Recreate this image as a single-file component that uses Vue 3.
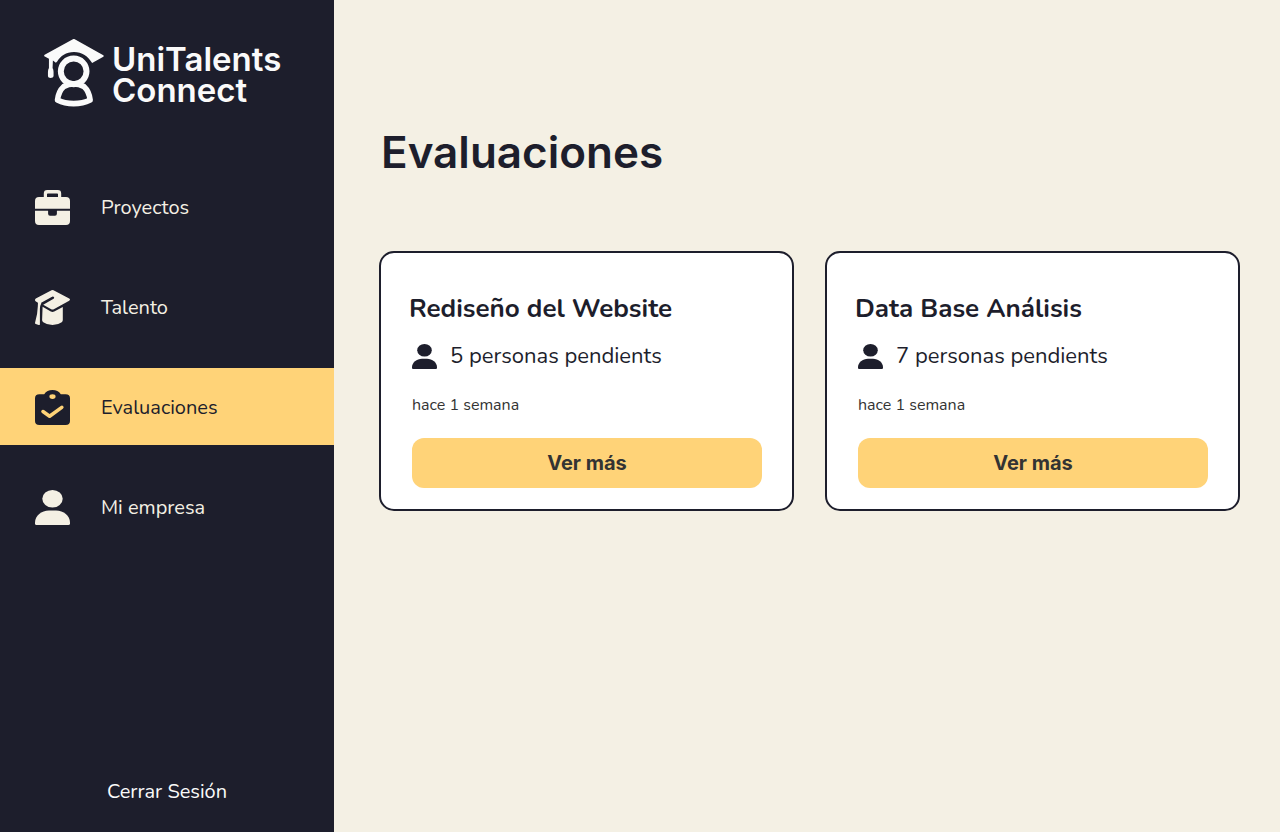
<script setup>
const navItems = [
  { id: 'proyectos', label: 'Proyectos' },
  { id: 'talento', label: 'Talento' },
  { id: 'evaluaciones', label: 'Evaluaciones' },
  { id: 'empresa', label: 'Mi empresa' },
]
const current = 'evaluaciones'

const evaluations = [
  { id: 1, title: 'Rediseño del Website', pending: '5 personas pendients', date: 'hace 1 semana' },
  { id: 2, title: 'Data Base Análisis', pending: '7 personas pendients', date: 'hace 1 semana' },
]
</script>

<template>
  <div class="app">
    <aside class="sidebar">
      <a class="brand" href="#">
        <svg class="brand-mark" viewBox="0 0 182 206" aria-hidden="true">
          <path fill="currentColor" d="M89 0 Q90 -1 92 0 L180 49 Q183 51 180 54 L146 73 C134 51 115 39 91 39 C67 39 50 51 40 68 L36 72 L27 65 L26 88 Q29 93 29 100 L29 113 Q28 118 20 118 Q12 118 12 113 L12 100 Q12 93 15 88 L15 60 L1 52 Q-1 50 2 48 Z" />
          <circle cx="90" cy="98" r="39" fill="none" stroke="currentColor" stroke-width="18" />
          <path fill="none" stroke="currentColor" stroke-width="17" stroke-linejoin="round" d="M60 144 C49 154 43 167 41 185 Q62 196 90 196 Q118 196 140 185 C138 167 132 154 121 144 Q107 136 90 136 Q74 136 60 144 Z" />
        </svg>
        <span class="brand-name">UniTalents<br />Connect</span>
      </a>

      <nav class="nav">
        <a
          v-for="item in navItems"
          :key="item.id"
          href="#"
          class="nav-item"
          :class="{ active: item.id === current }"
          :aria-current="item.id === current ? 'page' : undefined"
        >
          <svg class="nav-icon" viewBox="0 0 35 35" fill="currentColor" aria-hidden="true">
            <template v-if="item.id === 'proyectos'">
              <path fill-rule="evenodd" d="M8.8 7 V3.4 Q8.8 0 12.2 0 H22.8 Q26.2 0 26.2 3.4 V7 H31 Q35 7 35 11 V18.7 H0 V11 Q0 7 4 7 Z M12 7 H23 V4.2 Q23 3.4 22.2 3.4 H12.8 Q12 3.4 12 4.2 Z" />
              <path d="M0 20.8 H13.1 V23.8 Q13.1 25.7 15 25.7 H20 Q21.9 25.7 21.9 23.8 V20.8 H35 V31 Q35 35 31 35 H4 Q0 35 0 31 Z" />
            </template>
            <template v-else-if="item.id === 'talento'">
              <path d="M16.5 0.3 Q17.5 -0.2 18.5 0.3 L34.2 8.4 Q35.8 9.6 34.2 10.8 L18.8 19.2 Q17.5 19.9 16.2 19.2 L8.2 14.8 L18.6 8.8 Q19.6 8 18.9 7 Q18.2 6.3 17.1 6.8 L6.2 12.8 Q4.8 14 4.6 15.6 Q3.4 15.2 2.9 12.8 L0.6 11.2 Q-0.7 9.6 0.8 8.4 Z" />
              <path d="M3 12 L6.4 13 Q4.8 15.8 4.9 19.5 V34.2 Q4.9 35.3 3.7 35 L0.8 34 Q-0.2 33.6 0.1 32.4 Q2.6 24.5 2.8 16.5 Z" />
              <path d="M7.6 16.8 L15.8 21.5 Q17.5 22.4 19.2 21.5 L27.8 16.9 V30 Q27.8 31.3 26.7 32.2 Q23 35 17.5 35 Q12.1 35 8.3 32.2 Q7.1 31.2 7.1 30 Z" />
            </template>
            <template v-else-if="item.id === 'evaluaciones'">
              <path fill-rule="evenodd" d="M4.4 4.2 H9.2 Q12 0 17.5 0 Q23 0 25.8 4.2 H30.6 Q35 4.2 35 8.2 V31 Q35 35 30.6 35 H4.4 Q0 35 0 31 V8.2 Q0 4.2 4.4 4.2 Z M14.4 6.6 A3.1 2.4 0 1 0 20.6 6.6 A3.1 2.4 0 1 0 14.4 6.6 Z" />
              <path class="tick" d="M8 21.6 L14.6 26.2 L26.8 17.4" />
            </template>
            <template v-else>
              <ellipse cx="17.5" cy="8.8" rx="10.2" ry="8.8" />
              <path d="M0 32.4 C0 26 6.5 20.6 14 20.6 H21 C28.5 20.6 35 26 35 32.4 V33.5 Q35 35 33.4 35 H1.6 Q0 35 0 33.5 Z" />
            </template>
          </svg>
          <span>{{ item.label }}</span>
        </a>
      </nav>

      <button type="button" class="logout">Cerrar Sesión</button>
    </aside>

    <main class="content">
      <h1>Evaluaciones</h1>
      <section class="cards">
        <article v-for="entry in evaluations" :key="entry.id" class="card">
          <h2>{{ entry.title }}</h2>
          <p class="pending">
            <svg class="person" viewBox="0 0 35 35" fill="currentColor" aria-hidden="true">
              <ellipse cx="17.5" cy="8.8" rx="10.2" ry="8.8" />
              <path d="M0 32.4 C0 26 6.5 20.6 14 20.6 H21 C28.5 20.6 35 26 35 32.4 V33.5 Q35 35 33.4 35 H1.6 Q0 35 0 33.5 Z" />
            </svg>
            <span>{{ entry.pending }}</span>
          </p>
          <p class="date">{{ entry.date }}</p>
          <button type="button" class="more">Ver más</button>
        </article>
      </section>
    </main>
  </div>
</template>

<style>
body {
  margin: 0;
}
</style>

<style scoped>
.app {
  display: flex;
  min-height: 100vh;
  background: #f4f0e4;
  color: #1d1e2c;
  font-family: Nunito, "Open Sans", sans-serif;
}

.sidebar {
  display: flex;
  flex: 0 0 334px;
  flex-direction: column;
  box-sizing: border-box;
  padding: 38px 0 24px;
  background: #1d1e2c;
  color: #f4f0e4;
}

.brand {
  display: flex;
  gap: 8px;
  margin-left: 44px;
  color: #fafafa;
  text-decoration: none;
}

.brand-mark {
  width: 60px;
  height: 70px;
  overflow: visible;
}

.brand-name {
  padding-top: 6px;
  font: 600 33px/31px Inter, sans-serif;
}

.nav {
  display: flex;
  flex-direction: column;
  gap: 23px;
  margin-top: 60px;
}

.nav-item {
  display: flex;
  align-items: center;
  gap: 31px;
  padding: 22px 35px 20px;
  color: inherit;
  font-size: 20px;
  font-weight: 400;
  line-height: 28px;
  text-decoration: none;
}

.nav-item.active {
  background: #ffd378;
  color: #1d1e2c;
}

.nav-icon {
  flex: none;
  width: 35px;
  height: 35px;
}

.tick {
  fill: none;
  stroke: #ffd378;
  stroke-width: 3.6;
  stroke-linecap: round;
  stroke-linejoin: round;
}

.logout {
  align-self: center;
  margin-top: auto;
  padding: 0;
  border: 0;
  background: none;
  color: #fafafa;
  font: inherit;
  font-size: 20px;
  font-weight: 400;
  line-height: 32px;
  cursor: pointer;
}

.content {
  flex: 1;
  padding: 124px 40px 40px 45px;
}

h1 {
  margin: 0 0 71px 2px;
  font: 600 44px/56px Inter, sans-serif;
}

.cards {
  display: grid;
  grid-template-columns: 1fr 1fr;
  gap: 31px;
}

.card {
  display: flex;
  flex-direction: column;
  padding: 38px 30px 21px 31px;
  border: 2px solid #1d1e2c;
  border-radius: 15px;
  background: #fff;
}

h2 {
  margin: 0 0 12px -3px;
  font-size: 26px;
  font-weight: 700;
  line-height: 36px;
}

.pending {
  display: flex;
  align-items: center;
  gap: 13px;
  margin: 0 0 22px;
  font-size: 22px;
  line-height: 34px;
}

.person {
  flex: none;
  width: 25px;
  height: 25px;
}

.date {
  margin: 0 0 22px;
  color: #333;
  font-size: 16px;
  font-weight: 400;
  line-height: 21px;
}

.more {
  height: 50px;
  border: 0;
  border-radius: 12px;
  background: #ffd378;
  color: #333;
  font: 700 20px/24px Inter, sans-serif;
  cursor: pointer;
}
</style>
